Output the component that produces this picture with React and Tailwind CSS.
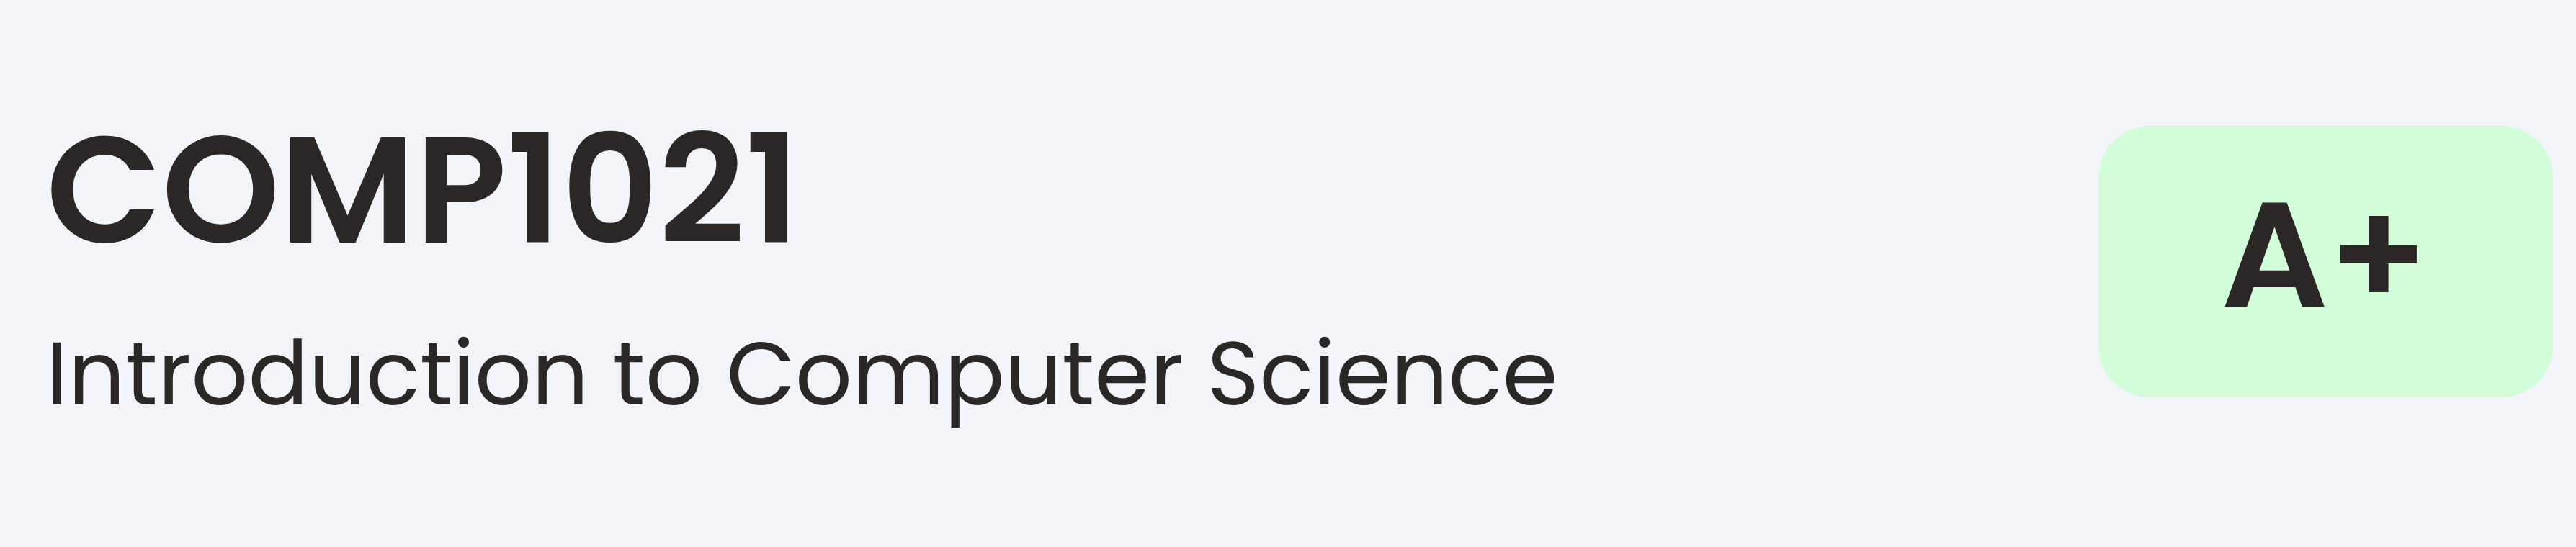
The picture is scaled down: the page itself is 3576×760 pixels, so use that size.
export default function App() {
  return (
    <div className="w-[3576px] h-[760px] bg-[#f2f4f9] flex items-start justify-between pl-[64px] pr-[32px] text-[#2b2726]" style={{ fontFamily: 'Poppins, Inter, "Noto Sans", sans-serif' }}>
      <div className="flex flex-col mt-[160px]">
        <div className="text-[209px] font-semibold leading-none">COMP1021</div>
        <div className="text-[124px] font-normal leading-none mt-[88px]">Introduction to Computer Science</div>
      </div>
      <div className="mt-[175px] w-[631px] h-[377px] rounded-[72px] bg-[#d1fdd9] flex items-center justify-center pb-[17px] pr-[2px]">
        <span className="text-[208px] font-semibold leading-none">A+</span>
      </div>
    </div>
  );
}
